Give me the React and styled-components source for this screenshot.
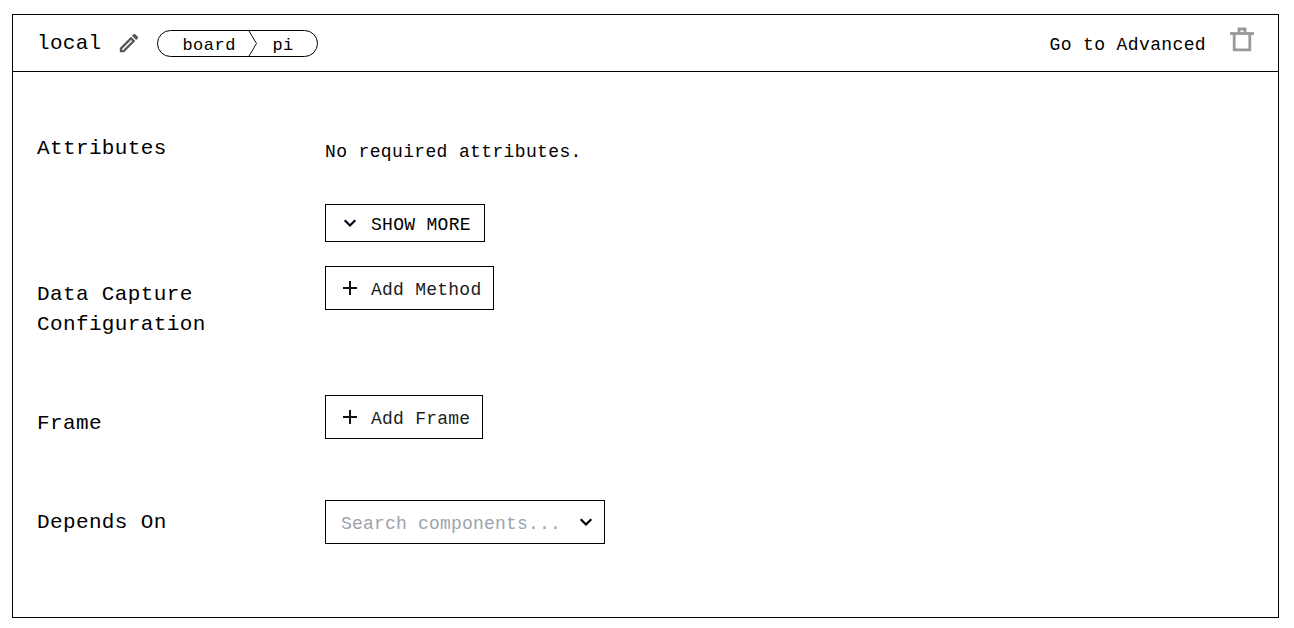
import React from "react";
import styled, { createGlobalStyle } from "styled-components";

const GlobalStyle = createGlobalStyle`
  *, *::before, *::after { box-sizing: border-box; }
  body {
    margin: 0;
    background: #fff;
    color: #000;
    font-family: "Liberation Mono", "DejaVu Sans Mono", monospace;
  }
`;

const Card = styled.main`
  display: flex;
  flex-direction: column;
  width: 1267px;
  height: 604px;
  margin: 14px 0 0 12px;
  border: 1px solid #000;
`;

const Header = styled.header`
  display: flex;
  align-items: center;
  height: 57px;
  padding: 0 24px;
  border-bottom: 1px solid #000;
`;

const Title = styled.h1`
  margin: 0;
  padding-top: 2px;
  font-size: 21px;
  font-weight: 400;
  line-height: 30px;
  letter-spacing: 0.28px;
`;

const IconButton = styled.button`
  display: flex;
  padding: 0;
  border: 0;
  background: none;
  margin: ${(p) => p.$margin || 0};
  svg { display: block; }
`;

const Breadcrumb = styled.div`
  display: flex;
  align-items: stretch;
  width: 161px;
  height: 27px;
  margin-left: 18px;
  border: 1px solid #000;
  border-radius: 14px;
  font-size: 17px;
  line-height: 25px;
  letter-spacing: 0.5px;
`;

const Crumb = styled.span`
  padding: 2px 0 0 ${(p) => p.$left}px;
  width: ${(p) => p.$width}px;
  white-space: nowrap;
`;

const Divider = styled.svg`
  flex: none;
  width: 10px;
  height: 25px;
`;

const ModeLink = styled.a`
  margin-left: auto;
  padding-top: 3px;
  font-size: 18px;
  line-height: 24px;
  letter-spacing: 0.37px;
`;

const Row = styled.section`
  display: grid;
  grid-template-columns: 288px 1fr;
  height: ${(p) => p.$height}px;
  padding-left: 24px;
`;

const Label = styled.h2`
  width: 200px;
  margin: ${(p) => p.$top}px 0 0;
  font-size: 21px;
  font-weight: 400;
  line-height: 30px;
  letter-spacing: 0.37px;
`;

const Field = styled.div`
  display: flex;
  flex-direction: column;
  align-items: flex-start;
`;

const Note = styled.p`
  margin: 68px 0 40px;
  font-size: 18px;
  line-height: 24px;
  letter-spacing: 0.36px;
`;

const Button = styled.button`
  display: flex;
  align-items: center;
  width: ${(p) => p.$width}px;
  height: ${(p) => p.$height || 44}px;
  padding: 0 0 0 16px;
  border: 1px solid #000;
  background: #fff;
  color: ${(p) => p.$color || "#1c1c1e"};
  font: inherit;
  font-size: 18px;
  line-height: 24px;
  letter-spacing: ${(p) => p.$spacing || 0.24}px;
  white-space: nowrap;
  svg { flex: none; }
`;

const ButtonText = styled.span`
  margin-left: 13px;
  padding-top: 4px;
`;

const Select = styled.div`
  display: flex;
  align-items: center;
  justify-content: space-between;
  width: 280px;
  height: 44px;
  padding: 0 10px 0 15px;
  border: 1px solid #000;
  font-size: 18px;
  line-height: 24px;
  letter-spacing: 0.2px;
  color: #9ca3af;
`;

const Placeholder = styled.span`
  padding-top: 4px;
`;

const Pencil = () => (
  <svg width="20" height="20" viewBox="0 0 20 20" fill="#5a5656">
    <path
      fillRule="evenodd"
      d="M.8 14.900 12 3.700l4.300 4.300L5.100 19.200H.8ZM3 15.900V17h1.100l9-9L12 6.900ZM12.900 2.800l1.700-1.600q.8-.8 1.600 0l2.600 2.600q.8.8 0 1.600L17.200 7.100Z"
    />
  </svg>
);

const Trash = () => (
  <svg width="24" height="25" viewBox="0 0 24 25" fill="none" stroke="#999" strokeWidth="2.800">
    <path d="M0 6.500H24" />
    <path d="M4.200 6.500V22.900H19.800V6.500" />
    <path d="M9 6.500V2H15V6.500" />
  </svg>
);

const Chevron = ({ color = "#000" }) => (
  <svg width="16" height="16" viewBox="0 0 16 16" fill="none" stroke={color} strokeWidth="2.200">
    <path d="m2.700 5.300 5.300 5.200 5.300-5.200" />
  </svg>
);

const Plus = () => (
  <svg width="16" height="16" viewBox="0 0 16 16" fill="none" stroke="#111" strokeWidth="2">
    <path d="M1 8H15M8 1V15" />
  </svg>
);

export default function App() {
  return (
    <>
      <GlobalStyle />
      <Card>
        <Header>
          <Title>local</Title>
          <IconButton aria-label="Rename" $margin="0 0 0 18px">
            <Pencil />
          </IconButton>
          <Breadcrumb>
            <Crumb $left={24} $width={90}>board</Crumb>
            <Divider viewBox="0 0 10 25" fill="none" stroke="#111">
              <path d="M1 0 8.500 12.500 1 25" />
            </Divider>
            <Crumb $left={14} $width={50}>pi</Crumb>
          </Breadcrumb>
          <ModeLink>Go to Advanced</ModeLink>
          <IconButton aria-label="Delete" $margin="-7px 0 0 24px">
            <Trash />
          </IconButton>
        </Header>

        <Row $height={194}>
          <Label $top={62}>Attributes</Label>
          <Field>
            <Note>No required attributes.</Note>
            <Button $width={160} $height={38} $spacing={0.3} $color="#000">
              <Chevron color="#000820" />
              <ButtonText>SHOW MORE</ButtonText>
            </Button>
          </Field>
        </Row>
        <Row $height={129}>
          <Label $top={14}>Data Capture Configuration</Label>
          <Field>
            <Button $width={169}>
              <Plus />
              <ButtonText>Add Method</ButtonText>
            </Button>
          </Field>
        </Row>
        <Row $height={105}>
          <Label $top={14}>Frame</Label>
          <Field>
            <Button $width={158}>
              <Plus />
              <ButtonText>Add Frame</ButtonText>
            </Button>
          </Field>
        </Row>
        <Row $height={117}>
          <Label $top={8}>Depends On</Label>
          <Field>
            <Select>
              <Placeholder>Search components...</Placeholder>
              <Chevron />
            </Select>
          </Field>
        </Row>
      </Card>
    </>
  );
}
